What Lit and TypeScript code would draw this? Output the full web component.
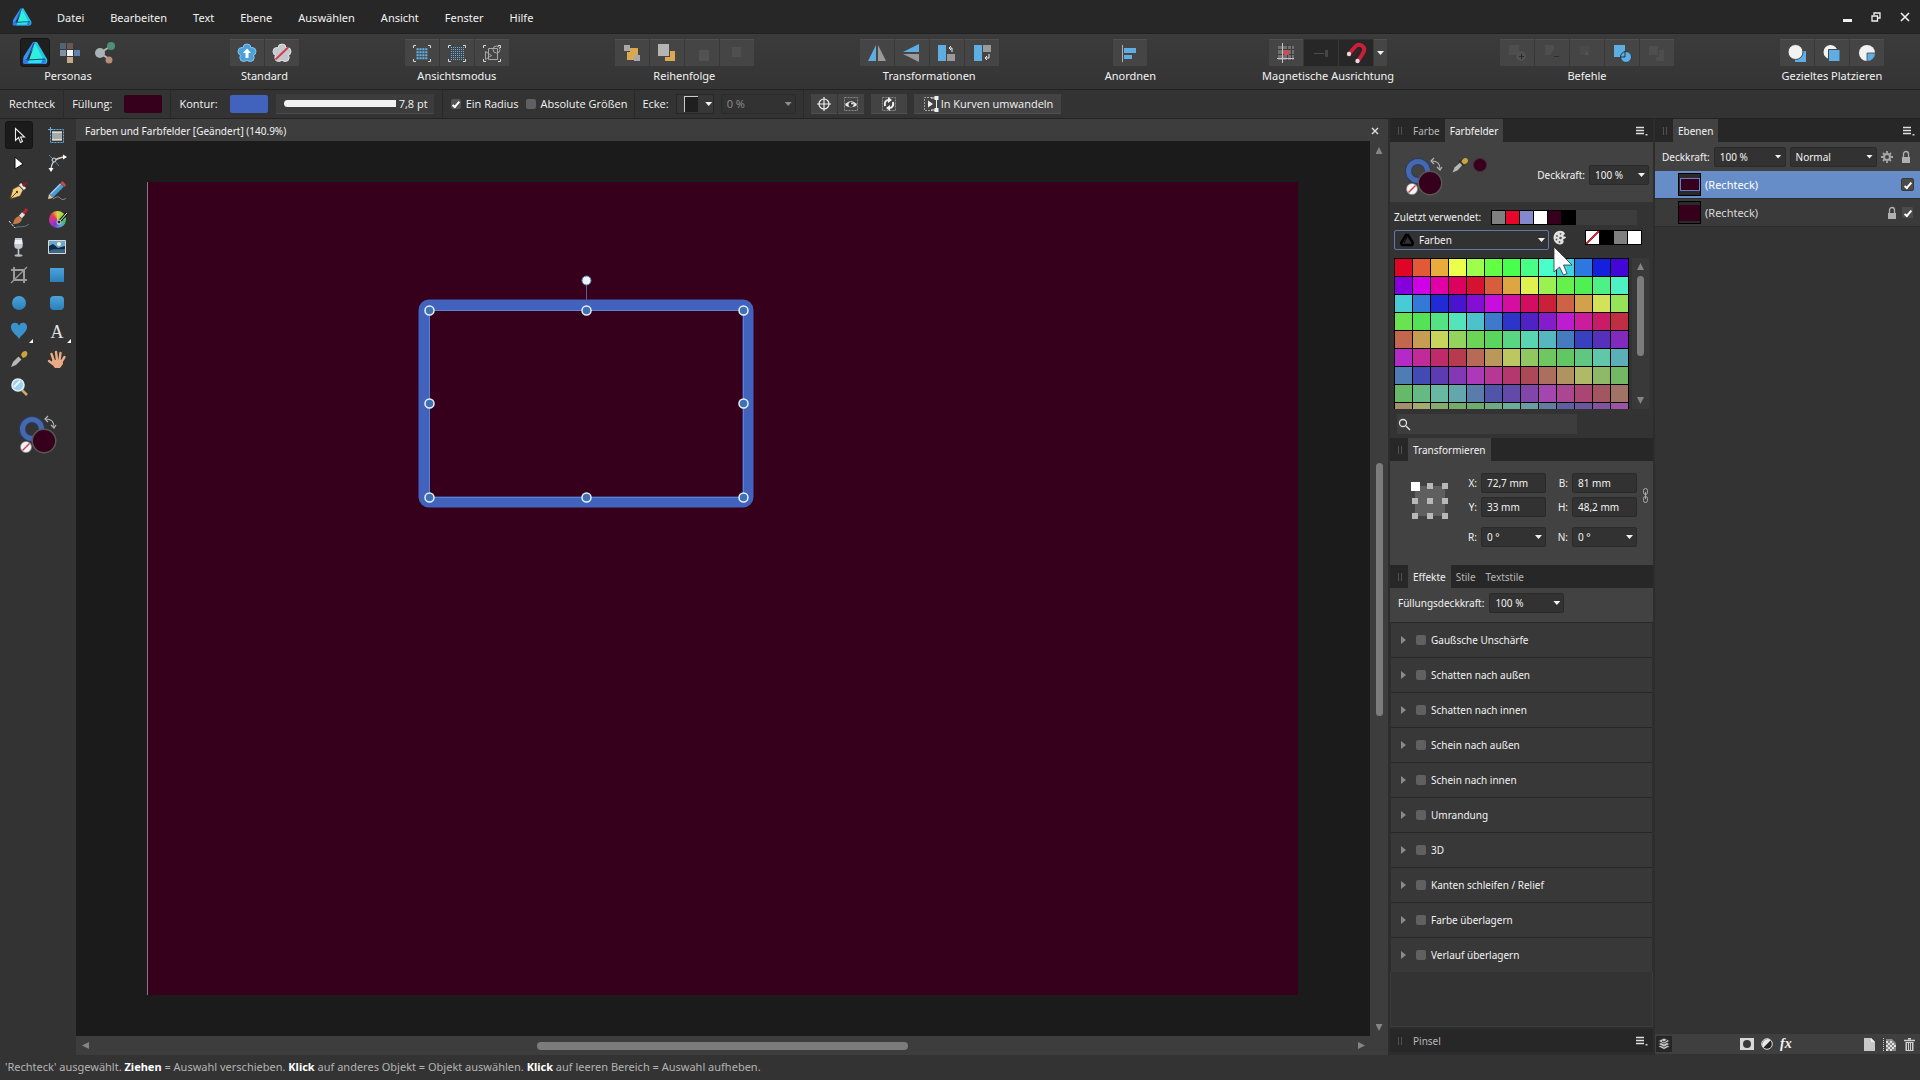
import { LitElement, html, svg, css, nothing, TemplateResult } from "lit";
import { customElement, state } from "lit/decorators.js";
import { classMap } from "lit/directives/class-map.js";
import { styleMap } from "lit/directives/style-map.js";

type Tpl = TemplateResult;

/* ---------- colour swatches ---------- */

const HUES = [
  "e00526", "e25a35", "e8ab3c", "ebff4b", "9dff4b", "62ff45", "47ff4c", "47ff85", "48ffcb",
  "40d4e0", "2a78e0", "1520dd", "4207d8", "8500dd", "cf00e8", "e000a5", "dc005f",
];

/* Every pass through the hues is mixed a little further towards grey. */
const swatchColour = (index: number): string => {
  const hue = HUES[index % HUES.length];
  const mix = 0.11 * Math.floor(index / HUES.length);
  const part = (at: number) => {
    const v = parseInt(hue.slice(at, at + 2), 16);
    return Math.round(v + (128 - v) * mix);
  };
  return `rgb(${part(0)}, ${part(2)}, ${part(4)})`;
};

const PALETTE = Array.from({ length: 13 * 9 }, (_, i) => swatchColour(i));
const RECENT = ["#808080", "#e8062c", "#8389cc", "#ffffff", "#36001d", "#000000"];

/* ---------- icons ---------- */

const logo = (size: number): Tpl => html`
  <svg width=${size} height=${size} viewBox="0 0 26 26" aria-hidden="true">
    <path d="M11 2h4L5 19l-4 2c0-2 .3-3 1-5z" fill="#3b8ff0" />
    <path d="M13 2h2l10 17c.8 2 0 5-2 5H5l-1-4 10-1z" fill="#1fc7e8" />
    <path d="M13 3l8 16-14 1z" fill="#2ff0e0" />
    <path d="M1 21c1-1 2-1.500 4-1.500L24 19c0 3-.5 5-2.500 5H3c-2 0-2.500-1-2-3z" fill="#2f7be8" />
    <path d="M7 20l14-1-2 4H6z" fill="#2be6df" />
    <path d="M12 3L5 20l18-1" fill="none" stroke="#0b4a80" stroke-width="1" />
  </svg>`;

const petals = (fill: string, edge: string) => svg`
  <g stroke=${edge} stroke-width="1">
    <circle cx="13" cy="8" r="4" fill=${fill} /><circle cx="18" cy="11.500" r="4" fill=${fill} />
    <circle cx="16.200" cy="17.500" r="4" fill=${fill} /><circle cx="9.800" cy="17.500" r="4" fill=${fill} />
    <circle cx="8" cy="11.500" r="4" fill=${fill} />
  </g>
  <circle cx="13" cy="13.300" r="6.500" fill=${fill} />`;

const frameCorners = html`
  <svg width="28" height="26" viewBox="0 0 28 26" aria-hidden="true">
    <path d="M5.500 8V5.500H8M20 5.500h2.500V8M22.500 19v2.500H20M8 21.500H5.500V19" fill="none" stroke="#d8d8d8" stroke-width="1" />
  </svg>`;

const icons: Record<string, () => Tpl> = {
  designer: () => logo(26),
  pixel: () => html`<svg width="26" height="26" viewBox="0 0 26 26" aria-hidden="true">
    <path d="M3 3h6v6H3z" fill="#4f6474" /><path d="M10 3h6v6h-6z" fill="#6a5750" />
    <path d="M3 10h6v6H3z" fill="#7d93a5" /><path d="M10 10h6v6h-6z" fill="#f2f2f2" />
    <path d="M17 10h6v6h-6z" fill="#5f82ad" /><path d="M10 17h6v6h-6z" fill="#c9a98c" /></svg>`,
  share: () => html`<svg width="26" height="26" viewBox="0 0 26 26" aria-hidden="true">
    <path d="M8 13l11-7M8 13l9 6" stroke="#b8b8b8" stroke-width="2" />
    <circle cx="8" cy="13" r="5" fill="#a9b2b5" /><circle cx="19" cy="6" r="4" fill="#4f8f74" />
    <circle cx="17" cy="20" r="3.500" fill="#b58e78" /></svg>`,
  sync: () => html`<svg width="26" height="26" viewBox="0 0 26 26" aria-hidden="true">${petals("#4d9fd8", "#86c4ee")}
    <path d="M13 8.500l4 4.500h-2.500v5h-3v-5H9z" fill="#fff" /></svg>`,
  revert: () => html`<svg width="26" height="26" viewBox="0 0 26 26" aria-hidden="true">${petals("#c4c8cd", "#dfe1e4")}
    <path d="M6.500 19.500L19.500 7" stroke="#d0394c" stroke-width="1.800" /></svg>`,
  viewPixels: () => html`<span class="stack">${frameCorners}
    <svg width="28" height="26" viewBox="0 0 28 26" aria-hidden="true"><path d="M8.500 9.250h11M8.500 12.250h11M8.500 15.250h11M8.500 18.250h11" stroke="#63b1e5" stroke-width="2.200" stroke-dasharray="2.200 .7" /></svg></span>`,
  viewRetina: () => html`<span class="stack">${frameCorners}
    <svg width="28" height="26" viewBox="0 0 28 26" aria-hidden="true"><path d="M8 7.500h13M8 9.500h13M8 11.500h13M8 13.500h13M8 15.500h13M8 17.500h13M8 19.500h13" stroke="#63b1e5" stroke-width="1" stroke-dasharray="1 1" /></svg></span>`,
  viewOutline: () => html`<span class="stack">${frameCorners}
    <svg width="28" height="26" viewBox="0 0 28 26" aria-hidden="true"><g fill="none" stroke="#a6a6a6"><path d="M10.500 8.500h9v11h-9z" /><circle cx="18.500" cy="9.500" r="3.500" /><path d="M7.500 11.500l6 4-6 4z" /></g></svg></span>`,
  toBack: () => html`<svg width="26" height="26" viewBox="0 0 26 26" aria-hidden="true">
    <path d="M11 8h8v8h-3v4H8v-8h3z" fill="#d9a850" /><path d="M5 5h6v6H5z" fill="#a8a8a8" /><path d="M15 15h6v6h-6z" fill="#a8a8a8" /></svg>`,
  backOne: () => html`<svg width="26" height="26" viewBox="0 0 26 26" aria-hidden="true">
    <path d="M11 11h10v10H11z" fill="#d9a850" /><path d="M4 4h12v13H4z" fill="#484848" /><path d="M4 4h11v12H4z" fill="#b4b4b4" /></svg>`,
  frontOne: () => html`<svg width="26" height="26" viewBox="0 0 26 26" aria-hidden="true"><path d="M10 10h10v11H10z" fill="#525252" /></svg>`,
  toFront: () => html`<svg width="26" height="26" viewBox="0 0 26 26" aria-hidden="true"><path d="M8 7h9v10H8z" fill="#4f4f4f" /></svg>`,
  flipH: () => html`<svg width="26" height="26" viewBox="0 0 26 26" aria-hidden="true">
    <path d="M12 5v16H4z" fill="#5eaee4" /><path d="M14 5v16h8z" fill="#9a9a9a" /></svg>`,
  flipV: () => html`<svg width="26" height="26" viewBox="0 0 26 26" aria-hidden="true">
    <path d="M20 4v8H4z" fill="#5eaee4" /><path d="M20 22v-8H4z" fill="#9a9a9a" /></svg>`,
  rotateL: () => html`<svg width="26" height="26" viewBox="0 0 26 26" aria-hidden="true">
    <path d="M4 5h8v16H4z" fill="#5eaee4" /><path d="M13 14h8v7h-8z" fill="#9a9a9a" />
    <path d="M18 12V8h-3m2-2l-2 2 2 2" fill="none" stroke="#f0f0f0" /></svg>`,
  rotateR: () => html`<svg width="26" height="26" viewBox="0 0 26 26" aria-hidden="true">
    <path d="M5 5h8v16H5z" fill="#5eaee4" /><path d="M14 5h8v7h-8z" fill="#9a9a9a" />
    <path d="M20 14v4h-4m2-2l-2 2 2 2" fill="none" stroke="#f0f0f0" /></svg>`,
  align: () => html`<svg width="26" height="26" viewBox="0 0 26 26" aria-hidden="true">
    <path d="M5.500 5v17" stroke="#b0b0b0" /><path d="M7 8h12v5H7zM7 15h8v4H7z" fill="#5eaee4" /></svg>`,
  grid: () => html`<svg width="26" height="26" viewBox="0 0 26 26" aria-hidden="true">
    <path d="M5 6h16v14H5z" fill="#707070" /><path d="M9.500 3v20M14.500 4v18M18.500 5v16M4 9.500h17M4 14.500h17M4 18.500h17" stroke="#3e3e3e" />
    <path d="M9.500 3v20M4 18.500h17" stroke="#c4c4c4" /><path d="M11 10h5v5h-5z" fill="#d04a58" /></svg>`,
  snapLine: () => html`<svg width="26" height="26" viewBox="0 0 26 26" aria-hidden="true"><path d="M6 13.500h10" stroke="#4c4c4c" /><path d="M17 10h3v7h-3z" fill="#454545" /></svg>`,
  magnet: () => html`<svg width="26" height="26" viewBox="0 0 26 26" aria-hidden="true">
    <path d="M6 14l5-6c3-4 6-4 8.500-2s2 5 0 8L15 21" fill="none" stroke="#c8203c" stroke-width="4" />
    <path d="M10 16l4-5c1-1 2-1 2 0" fill="none" stroke="#7c1226" />
    <circle cx="6" cy="14" r="2.200" fill="#e6dada" /><circle cx="14.500" cy="21" r="2.200" fill="#e6dada" /></svg>`,
  boolAdd: () => html`<svg width="26" height="26" viewBox="0 0 26 26" aria-hidden="true"><path d="M5 5h10v10H5z" fill="#4e4e4e" /><circle cx="17" cy="16" r="5" fill="#505050" /><path d="M17.500 14v5M15 16.500h5" stroke="#2c2c2c" /></svg>`,
  boolSub: () => html`<svg width="26" height="26" viewBox="0 0 26 26" aria-hidden="true"><path d="M6 5h9v5l-4 5H6z" fill="#4e4e4e" /><path d="M15 16.500h5" stroke="#2c2c2c" /></svg>`,
  boolInt: () => html`<svg width="26" height="26" viewBox="0 0 26 26" aria-hidden="true"><path d="M6 6h9v9H6z" fill="#4a4a4a" /><path d="M12 11l3 4h-4z" fill="#555" /></svg>`,
  boolXor: () => html`<svg width="26" height="26" viewBox="0 0 26 26" aria-hidden="true">
    <path d="M5 5h11v12H5z" fill="#5eaee4" /><circle cx="17" cy="17" r="5.500" fill="#5eaee4" stroke="#2b3e4b" />
    <path d="M16 11v6h-5" fill="none" stroke="#23303a" stroke-width="1" /></svg>`,
  boolDiv: () => html`<svg width="26" height="26" viewBox="0 0 26 26" aria-hidden="true"><path d="M5 6h9v9H5z" fill="#4e4e4e" /><path d="M15 10h5v11h-8v-4h3z" fill="#4e4e4e" /></svg>`,
  placeBack: () => html`<svg width="26" height="26" viewBox="0 0 26 26" aria-hidden="true"><path d="M11 11h11v11H11z" fill="#5eaee4" /><circle cx="11.500" cy="12" r="7.500" fill="#f2f2f2" stroke="#444" /></svg>`,
  placeFront: () => html`<svg width="26" height="26" viewBox="0 0 26 26" aria-hidden="true"><circle cx="11.500" cy="12" r="7" fill="#f2f2f2" /><path d="M9.500 9.500H21v12H9.500z" fill="#5eaee4" stroke="#444" /></svg>`,
  placeIn: () => html`<svg width="26" height="26" viewBox="0 0 26 26" aria-hidden="true"><circle cx="13" cy="13" r="8" fill="#f2f2f2" /><path d="M13 13h8.500a8.500 8.500 0 0 1-8.500 8.500z" fill="#5eaee4" stroke="#444" stroke-width=".8" /></svg>`,
  target: () => html`<svg width="20" height="18" viewBox="0 0 20 18" aria-hidden="true"><circle cx="10" cy="9" r="5" fill="none" stroke="#f0f0f0" stroke-width="1.200" /><path d="M10 2v14M3 9h14" stroke="#f0f0f0" stroke-width="1.200" /></svg>`,
  eye: () => html`<svg width="20" height="18" viewBox="0 0 20 18" aria-hidden="true"><path d="M3.500 2.500h13v13h-13z" fill="none" stroke="#8a8a8a" stroke-dasharray="2 1" /><path d="M4 10c3-5 9-5 12 0-3 3-9 3-12 0z" fill="#e8e8e8" /><circle cx="10" cy="9.500" r="2.500" fill="#333" /><circle cx="11" cy="8.500" r="1" fill="#e8e8e8" /></svg>`,
  cycle: () => html`<svg width="20" height="18" viewBox="0 0 20 18" aria-hidden="true"><path d="M3.500 2.500h13v13h-13z" fill="none" stroke="#8a8a8a" stroke-dasharray="2 1" /><path d="M6 11c-1-4 1-6 4-6M14 7c1 4-1 6-4 6" fill="none" stroke="#f0f0f0" stroke-width="2" /><path d="M9 2l4 3-4 3zM11 16l-4-3 4-3z" fill="#f0f0f0" /></svg>`,
  curves: () => html`<svg width="17" height="18" viewBox="0 0 17 18" aria-hidden="true"><path d="M10 2.500H2.500v13H10" fill="none" stroke="#a0a0a0" stroke-dasharray="2 1" /><path d="M14.500 4v10M9 3h5M9 15h5" fill="none" stroke="#f0f0f0" /><path d="M6 5.500l5 3.500-5 3.500zM12.500 1h4v4h-4zM12.500 13h4v4h-4z" fill="#f0f0f0" /></svg>`,
};

const tools: { id: string; label: string; flyout?: boolean; art: Tpl }[] = [
  { id: "move", label: "Verschieben", art: html`<svg width="24" height="24" viewBox="0 0 24 24" aria-hidden="true"><path d="M8.500 5.500v12l3-3 2 5 2-1-2-4.500h4z" fill="#141414" stroke="#ededed" stroke-width="1.100" /></svg>` },
  { id: "artboard", label: "Zeichenfläche", art: html`<svg width="24" height="24" viewBox="0 0 24 24" aria-hidden="true"><path d="M5.500 6.500h13v13h-13z" fill="none" stroke="#67b4e2" stroke-dasharray="2 1" /><path d="M3 6.500h5M5.500 4v5" stroke="#67b4e2" /><path d="M7 8h10v10H7z" fill="#a9a9a9" /><path d="M7 9.500h10M7 16.500h10" stroke="#dadada" /></svg>` },
  { id: "node", label: "Knoten", art: html`<svg width="24" height="24" viewBox="0 0 24 24" aria-hidden="true"><path d="M8 6v12l8-5z" fill="#fff" stroke="#111" /></svg>` },
  { id: "corner", label: "Ecke", art: html`<svg width="24" height="24" viewBox="0 0 24 24" aria-hidden="true"><path d="M6 20c0-8 3-13 14-14" fill="none" stroke="#d6d6d6" stroke-width="1.300" /><path d="M4 4l5 5 5 6" fill="none" stroke="#4a86b4" /><path d="M18 3.500l4 2.500-4 2.500zM3.500 17l2.500 4 2.500-4z" fill="#fff" /><circle cx="9" cy="9" r="2" fill="#444" stroke="#d6d6d6" /></svg>` },
  { id: "pen", label: "Zeichenstift", art: html`<svg width="24" height="24" viewBox="0 0 24 24" aria-hidden="true"><path d="M3 20l3-10 6-3 4 4-3 6z" fill="#f4cf82" stroke="#5c3d12" stroke-width=".6" /><path d="M3 20l6-6" stroke="#553a1a" /><circle cx="10" cy="13" r="1.200" fill="#553a1a" /><path d="M13 5l5 5" stroke="#e8e8e8" stroke-width="3" /><path d="M16 7l4-4" stroke="#80202c" stroke-width="3" /></svg>` },
  { id: "pencil", label: "Bleistift", art: html`<svg width="24" height="24" viewBox="0 0 24 24" aria-hidden="true"><path d="M6 17L17 6" stroke="#4c9ad0" stroke-width="5" /><path d="M5.500 15L15.500 5" stroke="#9ccdf0" stroke-width="1.300" /><path d="M15.500 4l4 4 1.500-2-3.500-4z" fill="#cf4a3c" /><path d="M4 15l4 4-5 1z" fill="#e6c49a" /><path d="M8 20c3-2 5-3 7-1s4 2 6 0" fill="none" stroke="#8d8d8d" /></svg>` },
  { id: "brush", label: "Pinsel", art: html`<svg width="24" height="24" viewBox="0 0 24 24" aria-hidden="true"><path d="M16 7l4-5" stroke="#b32434" stroke-width="3" /><path d="M13.500 10l3-3.500" stroke="#dfdfdf" stroke-width="4" /><path d="M6 17c1-5 3-7 6-8l3 3c-1 4-4 5-9 5z" fill="#c27a4a" /><path d="M2 14l6 7" stroke="#dcdcdc" stroke-dasharray="3 1" /><path d="M8 21c4-3 8 1 14-4" fill="none" stroke="#62798a" /></svg>` },
  { id: "fill", label: "Farbverlauf", art: html`<span class="wheel"><svg width="20" height="20" viewBox="0 0 20 20" aria-hidden="true"><path d="M10 11l8-9" stroke="#111" stroke-width="3" /><path d="M10 11l8-9" stroke="#fff" stroke-width="1" /><circle cx="10" cy="11" r="2" fill="#222" stroke="#ddd" /></svg></span>` },
  { id: "transparency", label: "Transparenz", art: html`<svg width="24" height="24" viewBox="0 0 24 24" aria-hidden="true"><path d="M8 3h7l.8 7c0 3-1.800 4-4.300 4S7.200 13 7.200 10z" fill="#c3c8d0" /><path d="M8 5h7l.5 4h-8z" fill="#eef0f5" /><path d="M11.500 14v6" stroke="#c3c8d0" stroke-width="1.600" /><ellipse cx="11.500" cy="20.500" rx="4" ry="1.200" fill="#b4bac2" /></svg>` },
  { id: "place", label: "Bild platzieren", art: html`<svg width="24" height="24" viewBox="0 0 24 24" aria-hidden="true"><path d="M3.500 5.500h17v13h-17z" fill="#6aa6d4" stroke="#d8d8d8" /><path d="M4 11l4-2 5 4 7-2v7H4z" fill="#102a44" /><circle cx="14" cy="9" r="2" fill="#fff3b8" /><path d="M4 16c5-3 9-1 16-2v4H4z" fill="#3c6788" /></svg>` },
  { id: "crop", label: "Vektorausschnitt", art: html`<svg width="24" height="24" viewBox="0 0 24 24" aria-hidden="true"><path d="M7 4v13h13M4 7h13v13" fill="none" stroke="#9c9c9c" stroke-width="2" /><path d="M4 20L20 4" stroke="#9c9c9c" stroke-width="1.300" /></svg>` },
  { id: "rect", label: "Rechteck", art: html`<span class="shape"></span>` },
  { id: "ellipse", label: "Ellipse", art: html`<span class="shape round"></span>` },
  { id: "rounded", label: "Abgerundetes Rechteck", art: html`<span class="shape soft"></span>` },
  { id: "heart", label: "Herz", flyout: true, art: html`<svg width="24" height="24" viewBox="0 0 24 24" aria-hidden="true"><path d="M12 7c1-5 9-4 8 2-1 5-6 7-8 11-2-4-7-6-8-11-1-6 7-7 8-2z" fill="#3a92cc" /></svg>` },
  { id: "text", label: "Text", flyout: true, art: html`<span class="glyph">A</span>` },
  { id: "picker", label: "Farbpipette", art: html`<svg width="24" height="24" viewBox="0 0 24 24" aria-hidden="true"><path d="M4 20l2-5 6-6 3 3-6 6z" fill="#b5b9bd" /><path d="M11 7l6 6" stroke="#3a3325" stroke-width="3" /><path d="M14 8c1-4 5-5 6-3s0 5-4 6z" fill="#c9a53c" /></svg>` },
  { id: "hand", label: "Ansicht", art: html`<svg width="24" height="24" viewBox="0 0 24 24" aria-hidden="true"><g stroke="#e8ab84" stroke-width="2.400" stroke-linecap="round"><path d="M9 14L6.500 7M12 13l-1-8M14.500 13l1-7M17 14l2.500-4M8 17l-4-3" /></g><path d="M7.500 13h10l.5 4-3 4h-5l-4-5z" fill="#e8ab84" /></svg>` },
  { id: "zoom", label: "Zoom", art: html`<svg width="24" height="24" viewBox="0 0 24 24" aria-hidden="true"><path d="M15 15l5 5" stroke="#c9ad62" stroke-width="2.500" /><circle cx="11" cy="10" r="6" fill="#9fd0ee" stroke="#e4eef4" stroke-width="1.600" /><path d="M7 12l6-6" stroke="#e6f6ff" stroke-width="2" /></svg>` },
];

const colourPair = html`
  <svg width="40" height="40" viewBox="0 0 40 40" role="img" aria-label="Kontur- und Füllfarbe">
    <circle cx="14" cy="15" r="9.500" fill="none" stroke="#2c3c60" stroke-width="7" />
    <circle cx="14" cy="15" r="9.500" fill="none" stroke="#4568b0" stroke-width="5" />
    <circle cx="26" cy="27" r="12.500" fill="#585858" />
    <circle cx="26" cy="27" r="11" fill="#36001d" />
    <circle cx="8" cy="33" r="5.500" fill="#f4f4f4" stroke="#888" stroke-width=".6" />
    <path d="M4.500 36.500l7-7" stroke="#d63a4c" stroke-width="1.500" />
    <path d="M28 5c5 0 8 3 8 8" fill="none" stroke="#b5b5b5" stroke-width="1.200" />
    <path d="M30 2l-3 3 3 3M33 11l3 3 2-3" fill="none" stroke="#b5b5b5" stroke-width="1.200" />
  </svg>`;

const lock = html`<svg width="10" height="14" viewBox="0 0 10 14" aria-hidden="true"><path d="M2.500 7V4a2.500 2.500 0 0 1 5 0v3" fill="none" stroke="#b0b0b0" stroke-width="1.300" /><path d="M1 7h8v6H1z" fill="#b0b0b0" /></svg>`;

const handle = (x: number, y: number) =>
  svg`<circle cx=${x - 0.5} cy=${y - 0.5} r="4.500" fill="#3f72b4" stroke="#e6f0fa" stroke-width="1.500" />`;

const anchorSpot = (x: number, y: number, selected: boolean) =>
  selected
    ? svg`<rect x=${x - 4} y=${y - 4} width="9" height="9" fill="#fff" />`
    : svg`<rect x=${x - 3} y=${y - 3} width="6" height="6" fill="#b8b8b8" />`;

/* ---------- data ---------- */

const MENUS = ["Datei", "Bearbeiten", "Text", "Ebene", "Auswählen", "Ansicht", "Fenster", "Hilfe"];

type Button = { icon: string; label: string; look?: "active" | "dark" };
const GROUPS: { name: string; bare?: boolean; drop?: boolean; buttons: Button[] }[] = [
  { name: "Personas", bare: true, buttons: [{ icon: "designer", label: "Designer", look: "active" }, { icon: "pixel", label: "Pixel" }, { icon: "share", label: "Export" }] },
  { name: "Standard", buttons: [{ icon: "sync", label: "Synchronisieren" }, { icon: "revert", label: "Zurücksetzen" }] },
  { name: "Ansichtsmodus", buttons: [{ icon: "viewPixels", label: "Pixel" }, { icon: "viewRetina", label: "Pixel (Retina)" }, { icon: "viewOutline", label: "Umrisse" }] },
  { name: "Reihenfolge", buttons: [{ icon: "toBack", label: "Nach hinten" }, { icon: "backOne", label: "Eins nach hinten" }, { icon: "frontOne", label: "Eins nach vorn" }, { icon: "toFront", label: "Nach vorn" }] },
  { name: "Transformationen", buttons: [{ icon: "flipH", label: "Horizontal spiegeln" }, { icon: "flipV", label: "Vertikal spiegeln" }, { icon: "rotateL", label: "Nach links drehen" }, { icon: "rotateR", label: "Nach rechts drehen" }] },
  { name: "Anordnen", buttons: [{ icon: "align", label: "Ausrichten" }] },
  { name: "Magnetische Ausrichtung", drop: true, buttons: [{ icon: "grid", label: "Am Raster" }, { icon: "snapLine", label: "Verschieben", look: "dark" }, { icon: "magnet", label: "Magnetisch", look: "dark" }] },
  { name: "Befehle", buttons: [{ icon: "boolAdd", label: "Addieren" }, { icon: "boolSub", label: "Subtrahieren" }, { icon: "boolInt", label: "Schnittmenge" }, { icon: "boolXor", label: "XOR" }, { icon: "boolDiv", label: "Aufteilen" }] },
  { name: "Gezieltes Platzieren", buttons: [{ icon: "placeBack", label: "Hinter Auswahl" }, { icon: "placeFront", label: "Vor Auswahl" }, { icon: "placeIn", label: "In Auswahl" }] },
];

const EFFECTS = [
  "Gaußsche Unschärfe", "Schatten nach außen", "Schatten nach innen", "Schein nach außen", "Schein nach innen",
  "Umrandung", "3D", "Kanten schleifen / Relief", "Farbe überlagern", "Verlauf überlagern",
];

const HANDLES = [
  [430, 311], [587, 311], [744, 311], [430, 404], [744, 404], [430, 498], [587, 498], [744, 498],
];

@customElement("app-root")
export class AppRoot extends LitElement {
  @state() private tool = "move";
  @state() private layer = 0;

  static styles = css`
    :host {
      display: flex;
      flex-direction: column;
      height: 100vh;
      overflow: hidden;
      background: #333;
      color: #f2f2f2;
      font: 11px/16px "Noto Sans", "Open Sans", sans-serif;
    }
    *, *::before, *::after { box-sizing: border-box; }
    button, input, select { font: inherit; color: inherit; margin: 0; padding: 0; border: 0; background: none; border-radius: 0; }
    button { display: flex; align-items: center; justify-content: center; }
    svg { display: block; flex: none; }
    .stack { display: grid; }
    .stack > svg { grid-area: 1 / 1; }

    .menubar { display: flex; align-items: center; height: 33px; flex: none; padding: 0 10px 0 12px; background: #272727; }
    .menubar nav { display: flex; gap: 26px; padding: 2px 0 0 25px; }
    .menubar a { color: inherit; text-decoration: none; }
    .window { display: flex; gap: 18px; margin-left: auto; }

    .toolbar { display: flex; justify-content: space-between; align-items: flex-start; height: 57px; flex: none; padding: 4px 36px 0 20px; background: linear-gradient(#3b3b3b, #343434); border-top: 1px solid #222; border-bottom: 1px solid #222; }
    .group { display: flex; flex-direction: column; align-items: center; }
    .group .name { padding-top: 1px; white-space: nowrap; }
    .buttons { display: flex; gap: 1px; height: 29px; align-items: center; }
    .buttons button { width: 34px; height: 27px; background: #454545; border-top: 1px solid #505050; }
    .buttons button.dark { background: #272727; border-color: #2f2f2f; }
    .buttons .drop { width: 13px; }
    .bare { padding-right: 4px; }
    .bare .name { padding-right: 4px; }
    .bare .buttons { gap: 5px; }
    .bare .buttons button { width: 30px; background: none; border: 0; }
    .bare .buttons button.active { height: 29px; background: #1f1f1f; border: 1px solid #151515; border-radius: 3px; }

    .context { display: flex; align-items: center; height: 29px; flex: none; padding: 0 9px; border-bottom: 1px solid #232323; gap: 8px; white-space: nowrap; font-family: "Open Sans", "Noto Sans", sans-serif; }
    .context .second { display: flex; align-items: center; align-self: stretch; gap: 7px; }
    .sep { width: 1px; align-self: stretch; background: #2a2a2a; }
    .well { width: 38px; height: 18px; margin-left: 4px; border-radius: 2px; }
    .well.dark { background: #36001d; }
    .well.blue { background: #4263bd; }
    .slider { display: flex; align-items: center; gap: 3px; width: 158px; height: 20px; padding: 0 4px 0 8px; background: #3c3c3c; border-bottom: 1px solid #4a4a4a; }
    .slider input[type="range"] { appearance: none; width: 112px; height: 7px; background: #f2f2f2; border-radius: 4px 0 0 4px; }
    .slider input[type="range"]::-webkit-slider-thumb { appearance: none; width: 0; height: 0; }
    .slider input[type="text"] { width: 32px; }
    .check { display: flex; align-items: center; gap: 5px; }
    .tick { appearance: none; display: grid; place-items: center; flex: none; width: 10px; height: 10px; background: #606060; border-radius: 2px; }
    .tick:checked { background: #555; }
    .tick:checked::after { content: ""; width: 4px; height: 8px; border: solid #fff; border-width: 0 2px 2px 0; transform: rotate(40deg); }
    .tick.big { width: 13px; height: 13px; border: 1px solid #3a3a3a; background: #4b4b4b; }
    .chip { display: flex; align-items: center; gap: 7px; width: 38px; height: 20px; padding-left: 7px; background: #373737; border: 1px solid #272727; }
    .chip i { width: 14px; height: 16px; background: #1f1f1f; border-top: 1px solid #ccc; border-left: 1px solid #ccc; }
    .tools-inline { display: flex; gap: 1px; }
    .flat { height: 20px; padding: 0 8px; background: #434343; border-bottom: 1px solid #505050; gap: 2px; }
    .tools-inline .flat { padding: 0 3px; }

    .drop-arrow { width: 7px; height: 4px; background: #f2f2f2; clip-path: polygon(0 0, 100% 0, 50% 100%); }
    .select { display: grid; align-items: center; height: 20px; background: #323232; border: 1px solid #2a2a2a; border-radius: 2px; }
    .select > * { grid-area: 1 / 1; }
    .select select { appearance: none; width: 100%; height: 18px; padding: 0 16px 0 5px; outline: 0; }
    .select .drop-arrow { justify-self: end; margin-right: 3px; pointer-events: none; }
    .select.dim { color: #8e8e8e; }
    .select.dim .drop-arrow { background: #8e8e8e; }

    .main { display: grid; grid-template-columns: 76px minmax(0, 1fr) 267px 265px; flex: 1; min-height: 0; }

    .toolbox { display: grid; grid-template-columns: 1fr 1fr; grid-auto-rows: 28px; justify-items: center; padding-top: 2px; align-content: start; }
    .toolbox button { position: relative; width: 28px; height: 28px; }
    .toolbox button.on { background: #1b1b1b; border: 1px solid #141414; border-radius: 3px; }
    .toolbox .fly::after { content: ""; position: absolute; right: 0; bottom: 2px; border: 2px solid #fff; border-top-color: transparent; border-left-color: transparent; }
    .toolbox .pair { grid-column: 1 / -1; justify-self: start; padding: 13px 0 0 18px; }
    .shape { width: 14px; height: 14px; background: linear-gradient(#4ba3da, #2c7fb8); }
    .shape.round { border-radius: 50%; }
    .shape.soft { border-radius: 4px; }
    .glyph { font: 18px/20px "Liberation Serif", serif; color: #e2e2e2; padding-top: 2px; }
    .wheel { display: grid; place-items: center; width: 17px; height: 17px; border-radius: 50%; background: conic-gradient(#e8d23c, #8ce03c, #39c463, #5fa0e0, #7a38c8, #c832b0, #e03c58, #e8d23c); }

    .doc { display: grid; grid-template: 22px minmax(0, 1fr) 19px / minmax(0, 1fr) 18px; background: #3d3d3d; }
    .doc-tab { grid-column: 1 / -1; display: flex; align-items: center; justify-content: space-between; padding: 1px 8px 0 9px; font-size: 10px; }
    .canvas { background: #1b1b1b; overflow: hidden; }
    .bar { display: flex; align-items: center; background: #3d3d3d; }
    .bar.v { flex-direction: column; padding: 6px 0 5px; }
    .bar.h { padding: 0 5px 0 6px; grid-column: 1; }
    .bar i { background: #7c7c7c; border-radius: 4px; }
    .bar.v i { width: 7px; height: 253px; margin: 309px 0 auto; }
    .bar.h i { height: 8px; width: 371px; margin: 0 auto 0 448px; }
    .arrow { width: 7px; height: 7px; background: #858585; }
    .arrow.up { clip-path: polygon(50% 0, 100% 100%, 0 100%); }
    .arrow.down { clip-path: polygon(0 0, 100% 0, 50% 100%); }
    .arrow.left { clip-path: polygon(100% 0, 100% 100%, 0 50%); }
    .arrow.right { clip-path: polygon(0 0, 100% 50%, 0 100%); }

    .studio { display: flex; flex-direction: column; padding: 0 2px; background: #2d2d2d; font-size: 10px; min-height: 0; }
    .tabs { display: flex; align-items: stretch; height: 23px; flex: none; padding-right: 5px; background: #272727; }
    .tabs .grip { width: 4px; height: 8px; margin: 8px 6px 0 8px; border: solid #505050; border-width: 0 1px; }
    .tabs button { padding: 0 5px; color: #b6b6b6; }
    .tabs button.on { background: #424242; color: #f2f2f2; }
    .tabs .menu { margin-left: auto; padding: 0; }
    .raised { background: #424242; }
    .sunk { background: #333; }

    .colour-head { display: flex; align-items: flex-start; height: 60px; padding: 14px 4px 0 14px; }
    .colour-head .drop-well { display: flex; align-items: center; gap: 4px; padding-left: 7px; }
    .colour-head .dot { width: 14px; height: 14px; border-radius: 50%; background: #36001d; border: 1px solid #4c2338; }
    .opacity { display: flex; align-items: center; gap: 4px; margin: 9px 0 0 auto; }
    .w60 { width: 60px; } .w65 { width: 65px; } .w74 { width: 74px; } .w75 { width: 75px; } .w90 { width: 90px; }
    .swatches { position: relative; display: grid; gap: 5px; padding: 7px 4px 4px; }
    .line { display: flex; align-items: center; height: 16px; }
    .line.tall { height: 20px; align-items: flex-start; }
    .run { display: flex; height: 15px; border: solid #000; border-width: 1px 0 1px 1px; }
    .run button { width: 14px; height: 13px; border-right: 1px solid #000; }
    .tall .run { margin-right: 7px; }
    .recent { display: flex; flex: 1; margin: 0 12px 0 auto; background: #3d3d3d; max-width: 146px; }
    .palette-pick { flex: none; width: 155px; border-color: #5c7ba8; }
    .palette-pick svg { margin-left: 5px; pointer-events: none; }
    .palette-pick select { padding-left: 24px; }
    .tall .wheel-btn { margin: 0 auto 0 3px; }
    .none { background: linear-gradient(to bottom right, #fff 46%, #c22a3c 46% 54%, #fff 54%); }
    .well-grid { display: flex; justify-content: space-between; height: 151px; margin-top: 3px; }
    .cells { display: grid; grid-template-columns: repeat(13, 18px); grid-auto-rows: 18px; height: 151px; overflow: hidden; border: solid #000; border-width: 1px 0 0 1px; }
    .cells button { border: solid #000; border-width: 0 1px 1px 0; }
    .well-grid .bar { width: 17px; padding: 5px 0; background: #393939; }
    .well-grid .bar i { height: 80px; margin: 6px 0 auto; }
    .search { display: flex; align-items: center; gap: 6px; width: 180px; height: 20px; margin-left: 3px; padding-left: 1px; background: #3d3d3d; }
    .search input { flex: 1; min-width: 0; outline: 0; }
    .pointer { position: absolute; left: 163px; top: 44px; pointer-events: none; }

    .transform { display: flex; height: 104px; padding: 12px 3px 0 21px; }
    .transform .anchor { padding-top: 8px; }
    .fields { display: grid; grid-template-columns: 15px 65px 18px 65px; column-gap: 4px; row-gap: 4px; align-content: start; align-items: center; justify-items: end; margin-left: 13px; }
    .fields .wide { margin-top: 6px; }
    .fields input { width: 65px; height: 20px; padding: 0 5px; background: #323232; border: 1px solid #2a2a2a; border-radius: 2px; outline: 0; }
    .fields .select select { padding-right: 12px; }
    .chain { padding: 15px 0 0 5px; }

    .fx-head { display: flex; align-items: center; gap: 5px; height: 34px; padding: 0 8px 4px; }
    .fx-row { display: flex; align-items: center; height: 35px; margin: 0 1px; padding-left: 10px; background: #383838; border-top: 1px solid #272727; }
    .fx-row .arrow { width: 5px; height: 8px; background: #8a8a8a; }
    .fx-row button { width: 5px; margin-right: 10px; }
    .rest { flex: 1; min-height: 0; margin-bottom: 2px; background: #333; border: 1px solid #3c3c3c; border-top: 0; }
    .pinsel { margin-bottom: 2px; height: 24px; }

    .layers { display: flex; flex-direction: column; min-width: 0; font-size: 10px; }
    .layer-opts { display: flex; align-items: center; gap: 4px; height: 29px; padding: 0 8px 0 7px; white-space: nowrap; }
    .layer-opts .icons { display: flex; align-items: center; gap: 8px; margin-left: auto; padding-right: 1px; }
    .layer { display: flex; align-items: center; height: 28px; padding: 0 6px 0 23px; gap: 4px; background: #3a3a3a; border-bottom: 1px solid #2c2c2c; font-size: 11px; color: #dadada; }
    .layer.on { background: #678dc8; color: #fff; }
    .layer .pick { gap: 4px; flex: 1; justify-content: flex-start; }
    .layer .thumb { display: grid; place-items: center; width: 23px; height: 23px; background: #2a2a2a; border: 1px solid #000; }
    .layer .thumb i { width: 21px; height: 16px; background: #36001d; }
    .layer .thumb.framed i { width: 20px; height: 13px; border: 1px solid #6d7cc8; }
    .layer-bar { display: flex; align-items: center; height: 20px; margin: auto 0 1px; padding: 0 5px 0 1px; background: #3f3f3f; }
    .layer-bar .stack-btn { width: 16px; height: 16px; background: #262626; }
    .layer-bar .mid { display: flex; align-items: center; gap: 7px; margin: 0 auto 0 68px; }
    .layer-bar .end { display: flex; align-items: center; gap: 8px; }
    .fx { font: italic bold 14px/16px "Liberation Serif", serif; }

    .status { height: 26px; flex: none; padding: 5px 5px 0; color: #b4b4b4; white-space: nowrap; }
    .status b { color: #fff; }
  `;

  private select(label: string, value: string, cls: string, before: Tpl | typeof nothing = nothing) {
    return html`<span class="select ${cls}">
      <select aria-label=${label}><option>${value}</option></select>${before}<span class="drop-arrow"></span>
    </span>`;
  }

  private tabs(names: string[], active: string, menu = true) {
    return html`<div class="tabs" role="tablist">
      <span class="grip"></span>
      ${names.map((n) => html`<button role="tab" aria-selected=${n === active} class=${classMap({ on: n === active })}>${n}</button>`)}
      ${menu
        ? html`<button class="menu" aria-label="Menü"><svg width="13" height="10" viewBox="0 0 13 10" aria-hidden="true"><path d="M1 1.500h8M1 4.500h8M1 7.500h8" stroke="#e0e0e0" stroke-width="1.500" /><path d="M10.500 8h2v1.500h-2z" fill="#ccc" /></svg></button>`
        : nothing}
    </div>`;
  }

  private toolbar() {
    return html`<div class="toolbar">
      ${GROUPS.map((g) => html`<div class="group ${g.bare ? "bare" : ""}">
        <div class="buttons">
          ${g.buttons.map((b) => html`<button class=${b.look ?? ""} aria-label=${b.label}>${icons[b.icon]()}</button>`)}
          ${g.drop ? html`<button class="drop" aria-label="Optionen"><span class="drop-arrow"></span></button>` : nothing}
        </div>
        <span class="name">${g.name}</span>
      </div>`)}
    </div>`;
  }

  private context() {
    return html`<div class="context">
      <span>Rechteck</span><span class="sep"></span>
      <span>Füllung:</span><button class="well dark" aria-label="Füllung"></button><span class="sep"></span>
      <span>Kontur:</span><button class="well blue" aria-label="Kontur"></button>
      <div class="slider">
        <input type="range" aria-label="Konturbreite" />
        <input type="text" aria-label="Konturbreite in Punkt" .value=${"7,8 pt"} />
      </div>
      <span class="sep"></span>
      <div class="second">
        <label class="check"><input type="checkbox" class="tick" checked />Ein Radius</label>
        <label class="check"><input type="checkbox" class="tick" />Absolute Größen</label>
        <span class="sep"></span>
        <span>Ecke:</span>
        <button class="chip" aria-label="Eckentyp"><i></i><span class="drop-arrow"></span></button>
        ${this.select("Eckenradius", "0 %", "dim w75")}
        <span class="sep"></span>
        <div class="tools-inline">
          <button class="flat" aria-label="Zentrum anzeigen">${icons.target()}</button>
          <button class="flat" aria-label="Auswahl ausblenden">${icons.eye()}</button>
        </div>
        <button class="flat" aria-label="Auswahlrahmen">${icons.cycle()}</button>
        <button class="flat">${icons.curves()}In Kurven umwandeln</button>
      </div>
    </div>`;
  }

  private toolbox() {
    return html`<div class="toolbox">
      ${tools.map((t) => html`<button
        class=${classMap({ on: t.id === this.tool, fly: !!t.flyout })}
        aria-label=${t.label} @click=${() => (this.tool = t.id)}>${t.art}</button>`)}
      <div class="pair">${colourPair}</div>
    </div>`;
  }

  private document() {
    return html`<div class="doc">
      <div class="doc-tab"><span>Farben und Farbfelder [Geändert] (140.9%)</span>
        <button aria-label="Dokument schließen"><svg width="10" height="10" viewBox="0 0 10 10" aria-hidden="true"><path d="M2 2l6 6M8 2l-6 6" stroke="#e0e0e0" stroke-width="1.400" /></svg></button>
      </div>
      <div class="canvas">
        <svg width="1294" height="895" viewBox="76 141 1294 895" role="img" aria-label="Zeichenfläche">
          <rect x="147" y="182" width="1151" height="813" fill="#36001d" />
          <path d="M147.500 182v813" stroke="#857a80" />
          <rect x="424" y="305" width="324" height="197" rx="5" fill="none" stroke="#4263bd" stroke-width="11" />
          <rect x="429.500" y="310.500" width="314" height="187" fill="none" stroke="#5b83cf" />
          <path d="M586.500 283v25" stroke="#5a5f96" />
          <circle cx="586.500" cy="280.500" r="4.500" fill="#eef4fc" stroke="#4c7fc4" />
          ${HANDLES.map(([x, y]) => handle(x, y))}
        </svg>
      </div>
      <div class="bar v"><span class="arrow up"></span><i></i><span class="arrow down"></span></div>
      <div class="bar h"><span class="arrow left"></span><i></i><span class="arrow right"></span></div>
    </div>`;
  }

  private swatchPanel() {
    return html`
      ${this.tabs(["Farbe", "Farbfelder"], "Farbfelder")}
      <div class="colour-head raised">
        ${colourPair}
        <div class="drop-well">
          <svg width="18" height="18" viewBox="0 0 24 24" aria-hidden="true"><path d="M2 22l3-7 7-6 3 3-6 7z" fill="#b5b9bd" /><path d="M11 6l7 7" stroke="#3a3325" stroke-width="3" /><path d="M14 8c1-5 6-7 8-4s0 6-5 7z" fill="#c9a53c" /></svg>
          <span class="dot"></span>
        </div>
        <div class="opacity"><span>Deckkraft:</span>${this.select("Deckkraft", "100 %", "w60")}</div>
      </div>
      <div class="swatches sunk">
        <div class="line"><span>Zuletzt verwendet:</span>
          <div class="recent"><div class="run">
            ${RECENT.map((c) => html`<button aria-label="Farbe ${c}" style=${styleMap({ background: c })}></button>`)}
          </div></div>
        </div>
        <div class="line tall">
          ${this.select("Palette", "Farben", "palette-pick", html`<svg width="14" height="14" viewBox="0 0 14 14" aria-hidden="true"><path d="M6 2h2l5 8-1 2H2l-1-2z" fill="none" stroke="#000" stroke-width="2.500" /><path d="M8 2l-4 8" stroke="#000" /></svg>`)}
          <button class="wheel-btn" aria-label="Palette"><svg width="16" height="16" viewBox="0 0 16 16" aria-hidden="true"><path d="M13 4C12 0 5-.5 2.500 4s0 10 5.500 10.500c3 0 4-2 3.500-3.500S11 9 13 8.500c1.500-.5 1-2-.5-2s-1.500-1 .5-2.500z" fill="#e2e2e2" /><g fill="#555"><circle cx="5" cy="6" r=".9" /><circle cx="8.500" cy="3.800" r=".9" /><circle cx="4.500" cy="9.500" r=".9" /><circle cx="8.500" cy="8" r="1.300" /><circle cx="7.500" cy="12" r=".9" /></g></svg></button>
          <div class="run">
            <button class="none" aria-label="Keine Farbe"></button>
            ${["#000000", "#808080", "#ffffff"].map((c) => html`<button aria-label="Farbe ${c}" style=${styleMap({ background: c })}></button>`)}
          </div>
        </div>
        <div class="well-grid">
          <div class="cells">${PALETTE.map((c, i) => html`<button aria-label="Farbfeld ${i + 1}" style=${styleMap({ background: c })}></button>`)}</div>
          <div class="bar v"><span class="arrow up"></span><i></i><span class="arrow down"></span></div>
        </div>
        <label class="search"><svg width="13" height="13" viewBox="0 0 13 13" aria-hidden="true"><circle cx="5" cy="5" r="3.500" fill="none" stroke="#e0e0e0" stroke-width="1.300" /><path d="M8 8l4 4" stroke="#e0e0e0" stroke-width="1.500" /></svg><input type="search" aria-label="Farbfelder suchen" /></label>
        <svg class="pointer" width="20" height="30" viewBox="0 0 20 30" aria-hidden="true"><path d="M1 1v25l5.500-5 4 8 3.500-1.500-3.500-8.500H19z" fill="#fff" stroke="#333" stroke-width=".8" /></svg>
      </div>`;
  }

  private transformPanel() {
    const spots = [4, 19, 34];
    return html`
      ${this.tabs(["Transformieren"], "Transformieren", false)}
      <div class="transform raised">
        <div class="anchor"><svg width="38" height="38" viewBox="0 0 38 38" role="img" aria-label="Ankerpunkt">
          <path d="M4 5h30v30H4z" fill="#5f5f5f" />
          ${spots.flatMap((y) => spots.map((x) => anchorSpot(x, y + 1, x === 4 && y === 4)))}
        </svg></div>
        <div class="fields">
          <label for="fx">X:</label><input id="fx" .value=${"72,7 mm"} />
          <label for="fb">B:</label><input id="fb" .value=${"81 mm"} />
          <label for="fy">Y:</label><input id="fy" .value=${"33 mm"} />
          <label for="fh">H:</label><input id="fh" .value=${"48,2 mm"} />
          <span class="wide">R:</span>${this.select("Rotation", "0 °", "w65 wide")}
          <span class="wide">N:</span>${this.select("Neigung", "0 °", "w65 wide")}
        </div>
        <div class="chain"><svg width="7" height="15" viewBox="0 0 7 15" aria-hidden="true"><g fill="none" stroke="#a8a8a8"><rect x="1.500" y=".5" width="4" height="6" rx="2" /><rect x="1.500" y="8.500" width="4" height="6" rx="2" /><path d="M3.500 4v7" /></g></svg></div>
      </div>`;
  }

  private effectsPanel() {
    return html`
      ${this.tabs(["Effekte", "Stile", "Textstile"], "Effekte", false)}
      <div class="fx-head raised"><span>Füllungsdeckkraft:</span>${this.select("Füllungsdeckkraft", "100 %", "w75")}</div>
      ${EFFECTS.map((name) => html`<div class="fx-row">
        <button aria-label="${name} aufklappen"><span class="arrow right"></span></button>
        <label class="check"><input type="checkbox" class="tick" />${name}</label>
      </div>`)}
      <div class="rest"></div>`;
  }

  private layersPanel() {
    return html`<div class="layers">
      ${this.tabs(["Ebenen"], "Ebenen")}
      <div class="layer-opts raised">
        <span>Deckkraft:</span>${this.select("Ebenendeckkraft", "100 %", "w74")}${this.select("Mischmodus", "Normal", "w90")}
        <span class="icons">
          <svg width="12" height="12" viewBox="0 0 12 12" aria-hidden="true"><circle cx="6" cy="6" r="3" fill="none" stroke="#a8a8a8" stroke-width="2" /><path d="M6 0v2M6 10v2M0 6h2M10 6h2M2 2l1.300 1.300M8.700 8.700L10 10M2 10l1.300-1.300M8.700 3.300L10 2" stroke="#a8a8a8" stroke-width="1.800" /></svg>
          ${lock}
        </span>
      </div>
      ${[0, 1].map((i) => html`<div class="layer ${this.layer === i ? "on" : ""}">
        <button class="pick" @click=${() => (this.layer = i)}><span class="thumb ${i === 0 ? "framed" : ""}"><i></i></span>(Rechteck)</button>
        ${i === 1 ? lock : nothing}
        <input type="checkbox" class="tick big" aria-label="Ebene ${i + 1} sichtbar" checked />
      </div>`)}
      <div class="layer-bar">
        <button class="stack-btn" aria-label="Alle Ebenen"><svg width="14" height="14" viewBox="0 0 14 14" aria-hidden="true"><g fill="#c8c8c8" stroke="#262626" stroke-width=".8"><path d="M7 6.500l6 3-6 3-6-3z" /><path d="M7 4l6 3-6 3-6-3z" /><path d="M7 1l6 3-6 3-6-3z" /></g><path d="M5 4l2 1 3-2" fill="none" stroke="#262626" /></svg></button>
        <span class="mid">
          <button aria-label="Maske"><svg width="14" height="12" viewBox="0 0 14 12" aria-hidden="true"><path d="M0 0h14v12H0z" fill="#d8d8d8" /><circle cx="7" cy="6" r="4" fill="#3a3a3a" /></svg></button>
          <button aria-label="Anpassung"><svg width="12" height="12" viewBox="0 0 12 12" aria-hidden="true"><circle cx="6" cy="6" r="5.300" fill="#222" stroke="#e0e0e0" /><path d="M9.700 2.300A5.300 5.300 0 0 0 2.300 9.700z" fill="#e8e8e8" /></svg></button>
          <button class="fx" aria-label="Ebeneneffekte">fx</button>
        </span>
        <span class="end">
          <button aria-label="Neue Ebene"><svg width="11" height="13" viewBox="0 0 11 13" aria-hidden="true"><path d="M0 0h7l4 4v9H0z" fill="#c8c8c8" /><path d="M7 0v4h4z" fill="#f0f0f0" /></svg></button>
          <button aria-label="Neue Pixelebene"><svg width="13" height="13" viewBox="0 0 13 13" aria-hidden="true"><path d="M3 1h6l4 4v8H3z" fill="#8a8a8a" /><path d="M3 3h2v2H3zM7 3h2v2H7zM5 5h2v2H5zM9 5h2v2H9zM3 7h2v2H3zM7 7h2v2H7zM11 7h2v2h-2zM5 9h2v2H5zM9 9h2v2H9zM3 11h2v2H3zM7 11h2v2H7z" fill="#e0e0e0" /><path d="M.500 0v13" stroke="#ccc" stroke-dasharray="1 1" /></svg></button>
          <button aria-label="Löschen"><svg width="11" height="13" viewBox="0 0 11 13" aria-hidden="true"><path d="M1.500 4h8v9h-8z" fill="#cfcfcf" /><path d="M0 2.500h11M4 .8h3" stroke="#cfcfcf" stroke-width="1.500" /><path d="M3.500 5v7M5.500 5v7M7.500 5v7" stroke="#444" /></svg></button>
        </span>
      </div>
    </div>`;
  }

  render() {
    return html`
      <header class="menubar">
        ${logo(20)}
        <nav>${MENUS.map((m) => html`<a href="#">${m}</a>`)}</nav>
        <div class="window">
          <button aria-label="Minimieren"><svg width="10" height="10" viewBox="0 0 10 10" aria-hidden="true"><path d="M0 7h9v3H0z" fill="#f0f0f0" /></svg></button>
          <button aria-label="Verkleinern"><svg width="11" height="10" viewBox="0 0 11 10" aria-hidden="true"><path d="M3 3V1h6v5H7" fill="none" stroke="#f0f0f0" stroke-width="1.300" /><path d="M1 4h5.500v5H1z" fill="none" stroke="#f0f0f0" stroke-width="1.300" /></svg></button>
          <button aria-label="Schließen"><svg width="10" height="10" viewBox="0 0 10 10" aria-hidden="true"><path d="M1 1l8 8M9 1L1 9" stroke="#f0f0f0" stroke-width="1.600" /></svg></button>
        </div>
      </header>
      ${this.toolbar()} ${this.context()}
      <main class="main">
        ${this.toolbox()} ${this.document()}
        <aside class="studio">
          ${this.swatchPanel()} ${this.transformPanel()} ${this.effectsPanel()}
          <div class="pinsel">${this.tabs(["Pinsel"], "")}</div>
        </aside>
        ${this.layersPanel()}
      </main>
      <footer class="status">'Rechteck' ausgewählt. <b>Ziehen</b> = Auswahl verschieben. <b>Klick</b> auf anderes Objekt = Objekt auswählen. <b>Klick</b> auf leeren Bereich = Auswahl aufheben.</footer>
    `;
  }
}
